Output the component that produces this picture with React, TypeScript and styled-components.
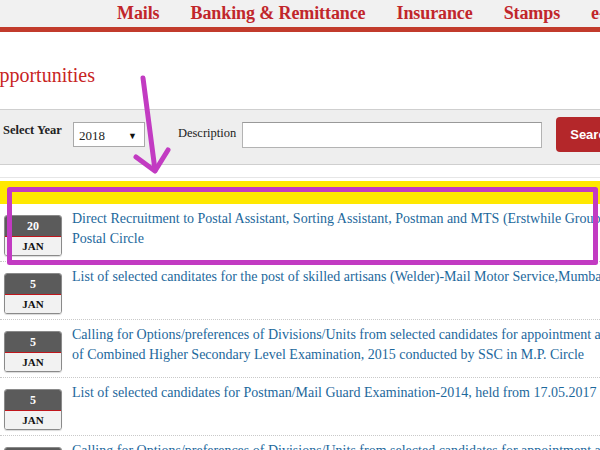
import React from 'react';
import styled, { createGlobalStyle } from 'styled-components';

type Notice = {
  day: string;
  month: string;
  lines: string[];
};

const notices: Notice[] = [
  {
    day: '20',
    month: 'JAN',
    lines: [
      "Direct Recruitment to Postal Assistant, Sorting Assistant, Postman and MTS (Erstwhile Group 'C') in Maharashtra",
      'Postal Circle',
    ],
  },
  {
    day: '5',
    month: 'JAN',
    lines: [
      'List of selected canditates for the post of skilled artisans (Welder)-Mail Motor Service,Mumbai',
    ],
  },
  {
    day: '5',
    month: 'JAN',
    lines: [
      'Calling for Options/preferences of Divisions/Units from selected candidates for appointment as Postal Assistants on the basis',
      'of Combined Higher Secondary Level Examination, 2015 conducted by SSC in M.P. Circle',
    ],
  },
  {
    day: '5',
    month: 'JAN',
    lines: [
      'List of selected candidates for Postman/Mail Guard Examination-2014, held from 17.05.2017 to 19.05.2017',
    ],
  },
  {
    day: '5',
    month: 'JAN',
    lines: [
      'Calling for Options/preferences of Divisions/Units from selected candidates for appointment as Postman/Mail Guard',
    ],
  },
];

const GlobalStyle = createGlobalStyle({
  'html, body': {
    margin: 0,
    padding: 0,
    width: '600px',
    height: '450px',
    overflow: 'hidden',
    background: '#ffffff',
    fontFamily: '"Liberation Serif", "Times New Roman", serif',
  },
});

const Page = styled.div({
  position: 'relative',
  width: '900px',
});

const NavBar = styled.nav({
  display: 'flex',
  alignItems: 'center',
  gap: '31px',
  height: '27px',
  paddingLeft: '117px',
  background: '#f1f1f1',
  borderBottom: '5px solid #c23b2c',
});

const NavItem = styled.a({
  color: '#c1262b',
  fontWeight: 'bold',
  fontSize: '18px',
  textDecoration: 'none',
  letterSpacing: '-0.1px',
});

const PageTitle = styled.h1({
  margin: 0,
  padding: '31px 0 22px',
  marginLeft: '-15px',
  color: '#c8241f',
  fontSize: '20px',
  fontWeight: 'normal',
  lineHeight: '24px',
});

const SearchBand = styled.form({
  display: 'flex',
  alignItems: 'flex-start',
  height: '54px',
  padding: '0 0 0 3px',
  background: '#eeeeee',
  borderTop: '1px solid #cfcfcf',
  borderBottom: '1px solid #cfcfcf',
});

const FieldLabel = styled.label<{ bold?: boolean }>(({ bold }) => ({
  fontSize: '12.5px',
  fontWeight: bold ? 'bold' : 'normal',
  color: '#222',
  marginTop: bold ? '13px' : '16px',
  marginRight: bold ? '11px' : '6px',
}));

const YearSelect = styled.div({
  display: 'flex',
  alignItems: 'center',
  justifyContent: 'space-between',
  boxSizing: 'border-box',
  width: '72px',
  height: '25px',
  marginTop: '12px',
  marginRight: '33px',
  padding: '2px 7px 0 5px',
  background: '#fff',
  border: '1px solid #a9a9a9',
  fontSize: '13px',
  color: '#222',
});

const Caret = styled.span({
  fontSize: '9px',
  color: '#111',
});

const DescInput = styled.input({
  boxSizing: 'border-box',
  width: '300px',
  height: '26px',
  marginTop: '12px',
  marginRight: '14px',
  background: '#fff',
  border: '1px solid #b3b3b3',
  borderTopColor: '#999',
});

const SearchButton = styled.button({
  marginTop: '7px',
  height: '35px',
  padding: '0 14px',
  border: 'none',
  borderRadius: '4px',
  background: '#b4272a',
  color: '#fff',
  fontFamily: '"Liberation Sans", Arial, sans-serif',
  fontWeight: 'bold',
  fontSize: '13px',
});

const Divider = styled.div({
  height: '12px',
  borderBottom: '1px solid #e6e6e6',
});

const Highlight = styled.div({
  height: '23px',
  marginTop: '3px',
  background: '#ffe800',
});

const NoticeList = styled.ul({
  listStyle: 'none',
  margin: 0,
  padding: 0,
});

const NoticeRow = styled.li({
  display: 'flex',
  alignItems: 'flex-start',
  height: '57px',
  padding: '0 0 0 4px',
  borderBottom: '1px dotted #c9c9c9',
});

const DateBadge = styled.div({
  flex: '0 0 auto',
  display: 'flex',
  flexDirection: 'column',
  boxSizing: 'border-box',
  width: '58px',
  height: '41px',
  marginTop: '11px',
  marginRight: '10px',
  border: '1px solid #8a8a8a',
  borderRadius: '3px',
  overflow: 'hidden',
  boxShadow: '0 1px 1px rgba(0,0,0,0.15)',
});

const BadgeDay = styled.div({
  height: '20px',
  lineHeight: '20px',
  textAlign: 'center',
  background: '#5b5b5b',
  color: '#fff',
  fontWeight: 'bold',
  fontSize: '12px',
  borderBottom: '1px solid #c0161c',
});

const BadgeMonth = styled.div({
  flex: 1,
  lineHeight: '19px',
  textAlign: 'center',
  background: '#f2f2f2',
  color: '#111',
  fontWeight: 'bold',
  fontSize: '11px',
});

const NoticeLink = styled.a({
  marginTop: '5px',
  color: '#1d689c',
  fontSize: '14px',
  lineHeight: '20px',
  whiteSpace: 'nowrap',
  textDecoration: 'none',
});

const Annotation = styled.svg({
  position: 'absolute',
  left: 0,
  top: 0,
  width: '600px',
  height: '450px',
  pointerEvents: 'none',
});

export default function App() {
  return (
    <Page>
      <GlobalStyle />
      <NavBar>
        <NavItem>Mails</NavItem>
        <NavItem>Banking &amp; Remittance</NavItem>
        <NavItem>Insurance</NavItem>
        <NavItem>Stamps</NavItem>
        <NavItem>e-Services</NavItem>
      </NavBar>

      <PageTitle>Opportunities</PageTitle>

      <SearchBand onSubmit={(e) => e.preventDefault()}>
        <FieldLabel bold>Select Year</FieldLabel>
        <YearSelect>
          <span>2018</span>
          <Caret>▼</Caret>
        </YearSelect>
        <FieldLabel>Description</FieldLabel>
        <DescInput />
        <SearchButton>Search</SearchButton>
      </SearchBand>

      <Divider />
      <Highlight />

      <NoticeList>
        {notices.map((n, i) => (
          <NoticeRow key={i}>
            <DateBadge>
              <BadgeDay>{n.day}</BadgeDay>
              <BadgeMonth>{n.month}</BadgeMonth>
            </DateBadge>
            <NoticeLink>
              {n.lines.map((line, j) => (
                <React.Fragment key={j}>
                  {j > 0 && <br />}
                  {line}
                </React.Fragment>
              ))}
            </NoticeLink>
          </NoticeRow>
        ))}
      </NoticeList>

      <Annotation viewBox="0 0 600 450">
        <g stroke="#c23bc2" strokeWidth="5" fill="none" strokeLinecap="round" strokeLinejoin="round">
          <rect x="9.5" y="189.5" width="586" height="73" strokeLinecap="butt" />
          <path d="M143 78 L155 170" />
          <path d="M136 157 L155 171 L168 150" />
        </g>
      </Annotation>
    </Page>
  );
}
